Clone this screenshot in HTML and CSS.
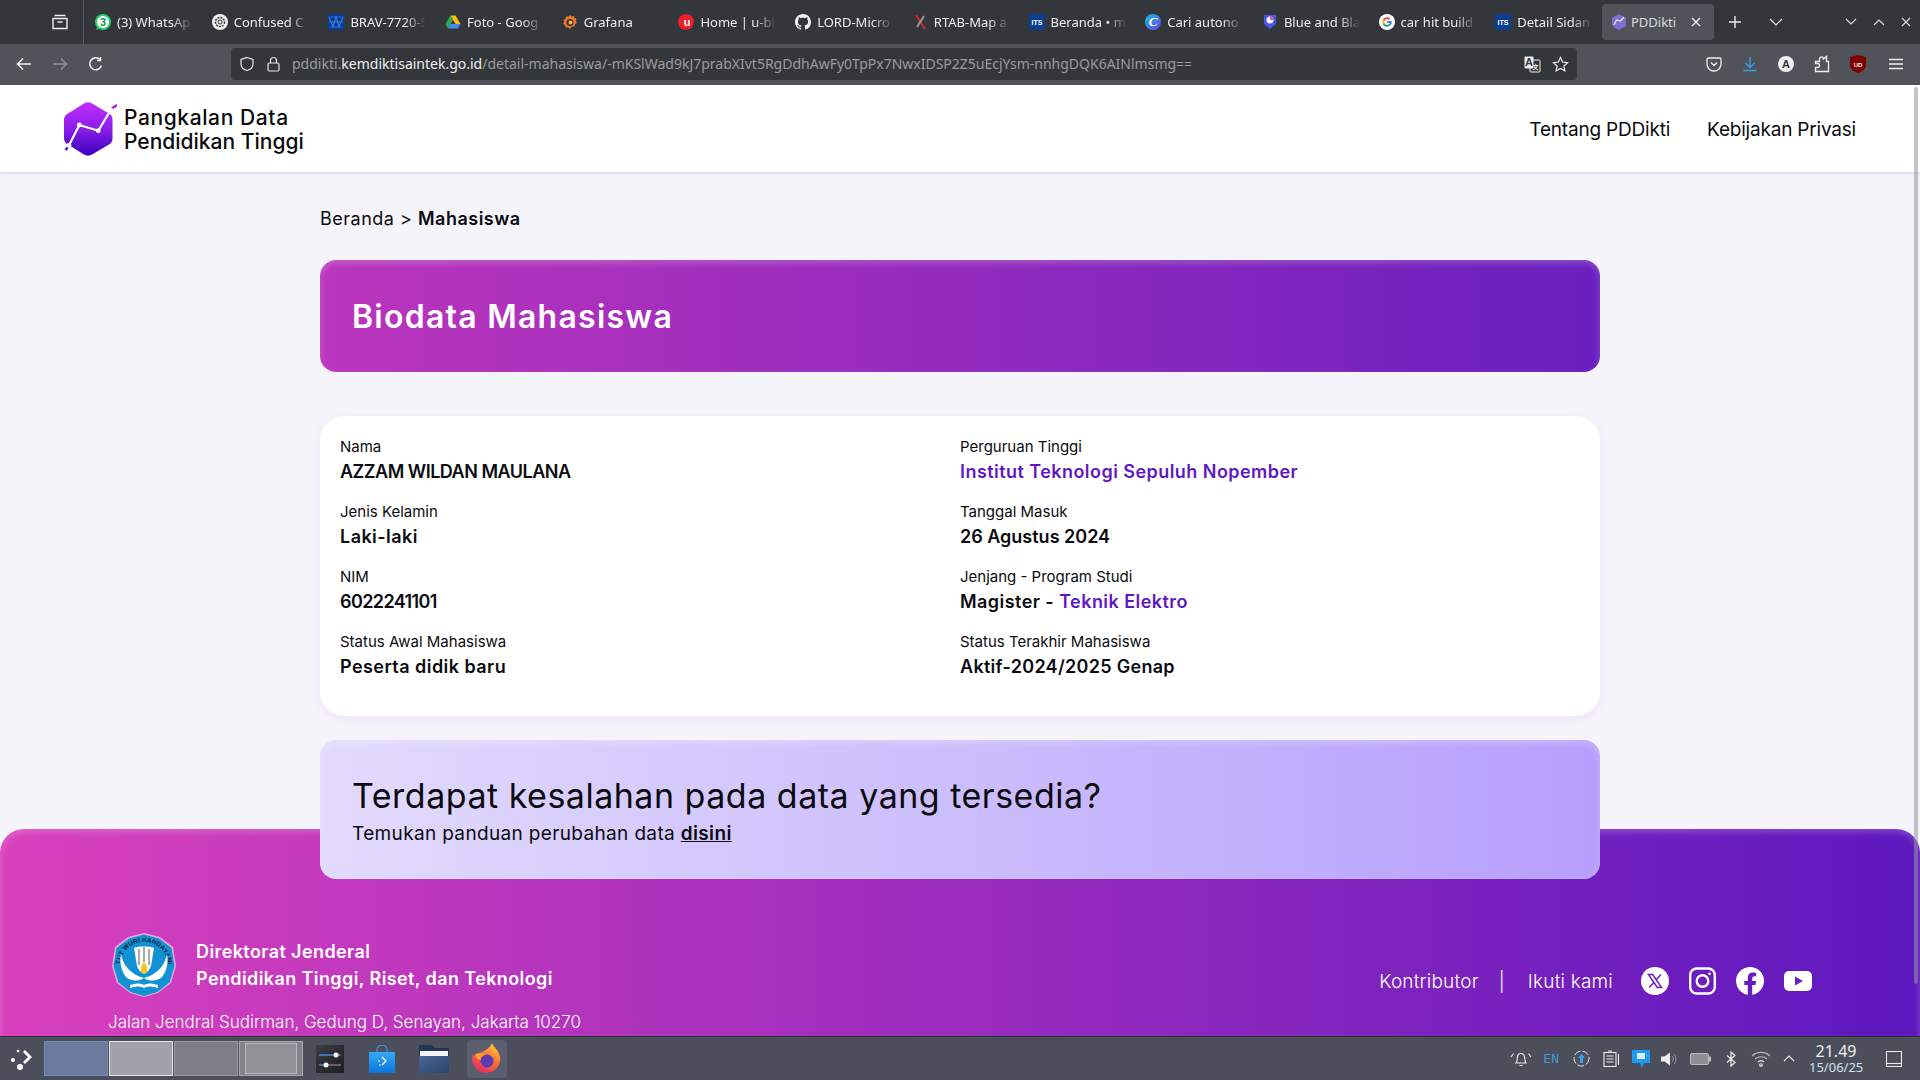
FILE: index.html
```html
<!DOCTYPE html>
<html lang="id">
<head>
<meta charset="utf-8">
<title>PDDikti</title>
<link rel="stylesheet" href="styles.css">
</head>
<body>
<div class="screen">
  <div class="tabbar">
    <div class="tabs-view">
      <svg width="18" height="18" viewBox="0 0 18 18" fill="none" stroke="#f1f1f1" stroke-width="1.4"><path d="M3.5 2.5h11M2 5.5h14v10H2zM6.5 9h5"/></svg>
    </div>
    <div class="tab"><svg class="fav" viewBox="0 0 16 16"><circle cx="8" cy="8" r="8" fill="#25d366"/><path d="M1 16l1.5-4 3 2z" fill="#25d366"/><circle cx="8" cy="8" r="6" fill="#fff"/><text x="8" y="11.5" class="favtxt" fill="#128c4a">3</text></svg><span class="tab-text">(3) WhatsAp</span></div>
    <div class="tab"><svg class="fav" viewBox="0 0 16 16"><circle cx="8" cy="8" r="8" fill="#eee"/><circle cx="8" cy="8" r="4.5" fill="none" stroke="#333" stroke-width="1.4" stroke-dasharray="2 1"/><circle cx="8" cy="8" r="2" fill="none" stroke="#333"/></svg><span class="tab-text">Confused C</span></div>
    <div class="tab"><svg class="fav" viewBox="0 0 16 16"><rect width="16" height="16" fill="#0a3a8c"/><path d="M1 3l4 10 3-10 3 10 4-10" fill="none" stroke="#2f7fe0" stroke-width="1.2"/><path d="M1 8h14M1 3h14M1 13h14" stroke="#2f7fe0" stroke-width=".8"/></svg><span class="tab-text">BRAV-7720-S</span></div>
    <div class="tab"><svg class="fav" viewBox="0 0 16 16"><path d="M5.5 1.5h5L15.5 10h-5z" fill="#fbbc04"/><path d="M5.5 1.5L.5 10l2.500 4.500L8 6z" fill="#34a853"/><path d="M3 14.500h10l2.500-4.500h-10z" fill="#4285f4"/></svg><span class="tab-text">Foto - Goog</span></div>
    <div class="tab"><svg class="fav" viewBox="0 0 16 16"><path d="M8 1l1.500 1.500L12 2l.5 2 2 1-.8 2 1.300 2-2 1-.5 2.500-2.500-.2L8 15l-2-1.700-2.500.2L3 11 1 10l1.300-2.300L1.500 5.500 3.500 5 4 2.500l2.500.3z" fill="#f2792a"/><circle cx="8" cy="8.500" r="3.600" fill="#33373c"/><circle cx="8.500" cy="8.500" r="2" fill="#f9b233"/></svg><span class="tab-text">Grafana</span></div>
    <div class="tab"><svg class="fav" viewBox="0 0 16 16"><circle cx="8" cy="8" r="8" fill="#e8202a"/><text x="9" y="12" class="favtxt" fill="#fff">u</text></svg><span class="tab-text">Home | u-bl</span></div>
    <div class="tab"><svg class="fav" viewBox="0 0 16 16"><path fill="#f0f0f0" fill-rule="evenodd" d="M8 0C3.580 0 0 3.580 0 8c0 3.540 2.290 6.530 5.470 7.590.4.070.55-.17.55-.38 0-.19-.01-.82-.01-1.490-2.010.37-2.530-.49-2.690-.94-.09-.23-.48-.94-.82-1.130-.28-.15-.68-.52-.01-.53.63-.01 1.080.58 1.230.82.720 1.210 1.870.87 2.330.66.070-.52.280-.87.510-1.070-1.780-.2-3.640-.89-3.640-3.950 0-.87.310-1.590.820-2.150-.08-.2-.36-1.020.08-2.120 0 0 .67-.21 2.200.82.640-.18 1.320-.27 2-.27s1.360.09 2 .27c1.530-1.040 2.200-.82 2.200-.82.440 1.100.160 1.920.080 2.120.510.560.820 1.270.820 2.150 0 3.070-1.870 3.750-3.650 3.950.290.250.540.730.540 1.480 0 1.070-.010 1.930-.010 2.200 0 .21.150.46.550.38A8.010 8.010 0 0 0 16 8c0-4.420-3.580-8-8-8z"/></svg><span class="tab-text">LORD-Micro</span></div>
    <div class="tab"><svg class="fav" viewBox="0 0 16 16"><path d="M4 1l9 14" stroke="#cf2a2a" stroke-width="2"/><path d="M12 2L5 13" stroke="#999" stroke-width="2"/></svg><span class="tab-text">RTAB-Map a</span></div>
    <div class="tab"><svg class="fav" viewBox="0 0 16 16"><rect width="16" height="16" rx="1" fill="#0b3d91"/><text x="8" y="10.500" class="favits" fill="#fff">ITS</text></svg><span class="tab-text">Beranda • m</span></div>
    <div class="tab"><svg class="fav" viewBox="0 0 16 16"><defs><linearGradient id="cv" x1="0" y1="0" x2="1" y2="1"><stop offset="0" stop-color="#10c6d8"/><stop offset="1" stop-color="#6a3df0"/></linearGradient></defs><circle cx="8" cy="8" r="8" fill="url(#cv)"/><text x="8" y="12" class="favtxt favserif" fill="#fff">C</text></svg><span class="tab-text">Cari autono</span></div>
    <div class="tab"><svg class="fav" viewBox="0 0 16 16"><path d="M2 1h12v9l-6 5-6-5z" fill="#4a55e8"/><circle cx="8" cy="6" r="3.500" fill="#fff"/><path d="M8 6V2.500A3.500 3.500 0 0 1 11.500 6z" fill="#e84aa8"/></svg><span class="tab-text">Blue and Bla</span></div>
    <div class="tab"><svg class="fav" viewBox="0 0 16 16"><circle cx="8" cy="8" r="8" fill="#fff"/><path d="M8 3.200a4.800 4.800 0 0 1 3.300 1.300l-1.400 1.400A2.800 2.800 0 0 0 5.300 7L3.700 5.700A4.800 4.800 0 0 1 8 3.200z" fill="#ea4335"/><path d="M3.700 5.700L5.300 7a2.900 2.900 0 0 0 0 2L3.700 10.300a4.800 4.800 0 0 1 0-4.600z" fill="#fbbc05"/><path d="M3.700 10.300L5.300 9a2.800 2.800 0 0 0 4.300 1.300l1.500 1.300A4.800 4.800 0 0 1 3.700 10.300z" fill="#34a853"/><path d="M12.800 7H8v2h2.700a2.400 2.400 0 0 1-1.100 1.300l1.500 1.300A4.800 4.800 0 0 0 12.800 7z" fill="#4285f4"/></svg><span class="tab-text">car hit build</span></div>
    <div class="tab"><svg class="fav" viewBox="0 0 16 16"><rect width="16" height="16" rx="1" fill="#0b3d91"/><text x="8" y="10.500" class="favits" fill="#fff">ITS</text></svg><span class="tab-text">Detail Sidan</span></div>
    <div class="tab tab-active"><svg class="fav" viewBox="0 0 16 16"><path d="M8 0l7 4v8l-7 4-7-4V4z" fill="#7d6fd0"/><path d="M3 11l2.500-5 4 1L13 3" fill="none" stroke="#e8e8f4" stroke-width="1.200"/></svg><span class="tab-text tab-text-solid">PDDikti</span><svg class="tab-close" width="10" height="10" viewBox="0 0 10 10" stroke="#eee" stroke-width="1.300"><path d="M1 1l8 8M9 1l-8 8"/></svg></div>
    <div class="tabbar-tools">
      <svg width="14" height="14" viewBox="0 0 14 14" stroke="#eee" stroke-width="1.400"><path d="M7 1v12M1 7h12"/></svg>
      <svg width="14" height="10" viewBox="0 0 14 10" fill="none" stroke="#eee" stroke-width="1.200"><path d="M1 2l6 6 6-6"/></svg>
    </div>
    <div class="window-btns">
      <svg width="12" height="8" viewBox="0 0 12 8" fill="none" stroke="#ddd" stroke-width="1.100"><path d="M1 1l5 5 5-5"/></svg>
      <svg width="12" height="8" viewBox="0 0 12 8" fill="none" stroke="#ddd" stroke-width="1.100"><path d="M1 7l5-5 5 5"/></svg>
      <svg width="10" height="10" viewBox="0 0 10 10" stroke="#ddd" stroke-width="1.100"><path d="M1 1l8 8M9 1l-8 8"/></svg>
    </div>
  </div>

  <div class="navbar">
    <div class="nav-btns">
      <svg width="16" height="14" viewBox="0 0 16 14" fill="none" stroke="#f0f0f0" stroke-width="1.500"><path d="M15 7H2M7 1.500L1.500 7 7 12.500"/></svg>
      <svg width="16" height="14" viewBox="0 0 16 14" fill="none" stroke="#8d9095" stroke-width="1.500"><path d="M1 7h13M9 1.500L14.500 7 9 12.500"/></svg>
      <svg width="16" height="16" viewBox="0 0 16 16" fill="none" stroke="#f0f0f0" stroke-width="1.500"><path d="M13.500 9.500A6 6 0 1 1 12 3.500M12.500 1v3.500H9"/></svg>
    </div>
    <div class="urlbar">
      <svg width="16" height="16" viewBox="0 0 16 16" fill="none" stroke="#e8e8e8" stroke-width="1.200"><path d="M8 1.500l6 2v4.500c0 3-2.500 5.500-6 6.500-3.500-1-6-3.500-6-6.500V3.500z"/></svg>
      <svg width="13" height="16" viewBox="0 0 13 16" fill="none" stroke="#e8e8e8" stroke-width="1.200"><rect x="1" y="7" width="11" height="8" rx="1.500"/><path d="M3.500 7V4.500a3 3 0 0 1 6 0V7"/></svg>
      <div class="url"><span class="url-dim">pddikti.</span><span class="url-host">kemdiktisaintek.go.id</span><span class="url-dim">/detail-mahasiswa/-mKSlWad9kJ7prabXIvt5RgDdhAwFy0TpPx7NwxIDSP2Z5uEcjYsm-nnhgDQK6AINlmsmg==</span></div>
      <svg width="17" height="17" viewBox="0 0 17 17"><rect x="6" y="4" width="10" height="12" rx="1" fill="#33373c" stroke="#eee"/><rect x="0.500" y="0.500" width="9" height="12" rx="1" fill="#eee"/><text x="5" y="10" class="favtxt favdark">A</text><text x="11.500" y="13" class="favtiny" fill="#eee">文</text></svg>
      <svg width="17" height="17" viewBox="0 0 17 17" fill="none" stroke="#eee" stroke-width="1.200"><path d="M8.500 1.500l2.100 4.500 4.900.6-3.600 3.400 1 4.800-4.400-2.400-4.400 2.400 1-4.800L1.500 6.600l4.900-.6z"/></svg>
    </div>
    <div class="nav-ext">
      <svg width="16" height="16" viewBox="0 0 16 16" fill="none" stroke="#eee" stroke-width="1.300"><path d="M2.500 2h11A1.500 1.500 0 0 1 15 3.500V8a7 7 0 0 1-14 0V3.500A1.500 1.500 0 0 1 2.500 2zM5 6.500l3 3 3-3"/></svg>
      <svg width="16" height="16" viewBox="0 0 16 16" fill="none" stroke="#3aa0e8" stroke-width="1.400"><path d="M8 1v10M3.500 7L8 11.500 12.500 7M1.500 14.500h13"/></svg>
      <svg width="16" height="16" viewBox="0 0 16 16"><circle cx="8" cy="8" r="8" fill="#eee"/><text x="8" y="12" class="favtxt favdark">A</text></svg>
      <svg width="16" height="18" viewBox="0 0 16 18" fill="none" stroke="#eee" stroke-width="1.300"><path d="M1.500 6.500h4V4a2 2 0 0 1 4 0v0l3-2.500v5h2v10h-13v-4h2a2 2 0 0 0 0-4h-2z"/></svg>
      <svg width="16" height="18" viewBox="0 0 16 18"><path d="M8 0l8 2v8c0 4-4 7-8 8-4-1-8-4-8-8V2z" fill="#800000"/><text x="8" y="11.500" class="favtiny" fill="#eee">UD</text></svg>
      <svg class="menu-icon" width="14" height="12" viewBox="0 0 14 12" stroke="#eee" stroke-width="1.300"><path d="M0 1.500h14M0 6h14M0 10.500h14"/></svg>
    </div>
  </div>

  <div class="viewport">
    <header class="site-header">
      <div class="brand">
        <svg class="brand-logo" width="53" height="54" viewBox="0 0 53 54">
          <defs><linearGradient id="logo" x1="0" y1="0" x2="0" y2="1"><stop offset="0" stop-color="#c22dff"/><stop offset=".5" stop-color="#8a1ee8"/><stop offset="1" stop-color="#3700bd"/></linearGradient></defs>
          <path d="M20 1.500a8 8 0 0 1 8 0l17 10a7 7 0 0 1 3.500 6v19a7 7 0 0 1-3.500 6l-17 10a8 8 0 0 1-8 0l-16-10a7 7 0 0 1-4-6v-19a7 7 0 0 1 4-6z" fill="url(#logo)"/>
          <path d="M4.300 44.700L15.300 23l19 5.700L47.700 6.300" fill="none" stroke="#fff" stroke-width="2.200"/>
          <path d="M47 7L53 3" stroke="#a024f5" stroke-width="2.500"/>
          <path d="M4 45l-2.500 3" stroke="#5a10cf" stroke-width="2.500"/>
          <circle cx="15.300" cy="23" r="2.400" fill="#fff"/><circle cx="34.300" cy="28.700" r="2.400" fill="#fff"/><circle cx="46.700" cy="7.800" r="2.400" fill="#fff"/><circle cx="5" cy="43.500" r="2.400" fill="#fff"/>
        </svg>
        <div class="brand-text"><div class="brand-l1">Pangkalan Data</div><div class="brand-l2">Pendidikan Tinggi</div></div>
      </div>
      <nav class="site-nav"><a>Tentang PDDikti</a><a>Kebijakan Privasi</a></nav>
    </header>

    <main class="content">
      <div class="crumbs">Beranda &gt; <b>Mahasiswa</b></div>
      <section class="hero"><h1>Biodata Mahasiswa</h1></section>
      <section class="bio-card">
        <div class="field"><div class="f-label">Nama</div><div class="f-value f-caps">AZZAM WILDAN MAULANA</div></div>
        <div class="field"><div class="f-label">Perguruan Tinggi</div><div class="f-value"><a class="f-link">Institut Teknologi Sepuluh Nopember</a></div></div>
        <div class="field"><div class="f-label">Jenis Kelamin</div><div class="f-value">Laki-laki</div></div>
        <div class="field"><div class="f-label">Tanggal Masuk</div><div class="f-value f-date">26 Agustus 2024</div></div>
        <div class="field"><div class="f-label">NIM</div><div class="f-value f-num">6022241101</div></div>
        <div class="field"><div class="f-label">Jenjang - Program Studi</div><div class="f-value">Magister - <a class="f-link">Teknik Elektro</a></div></div>
        <div class="field"><div class="f-label">Status Awal Mahasiswa</div><div class="f-value">Peserta didik baru</div></div>
        <div class="field"><div class="f-label">Status Terakhir Mahasiswa</div><div class="f-value f-last">Aktif-2024/2025 Genap</div></div>
      </section>
      <section class="help">
        <h2>Terdapat kesalahan pada data yang tersedia?</h2>
        <p>Temukan panduan perubahan data <a>disini</a></p>
      </section>
    </main>

    <footer class="site-footer">
      <div class="foot-left">
        <div class="foot-org">
          <svg class="emblem" width="64" height="66" viewBox="0 0 64 66">
            <defs><path id="arc" d="M8 34a24 24 0 0 1 48 0"/></defs>
            <path d="M32 1l16 4 13 10 3 19-5 17-13 10-14 4-14-4-13-10L0 34l3-19L16 5z" fill="#fff" opacity=".55"/>
            <path d="M32 2.500l15 4 12.500 9.500 3 18-5 16.500-12 9.500-13.500 4-13.500-4-12-9.500-5-16.500 3-18L17 6.500z" fill="#1192d4"/>
            <text class="emblem-text" fill="#10233f"><textPath href="#arc" startOffset="50%" text-anchor="middle">TUT WURI HANDAYANI</textPath></text>
            <path d="M22 16c3-2 17-2 20 0l-3 18c-1 3-3 6-7 8-4-2-6-5-7-8z" fill="#fff"/>
            <path d="M27 17v16M32 15v15M37 17v16" stroke="#555" stroke-width="1"/>
            <path d="M9 22c2 10 8 20 23 24-6 4-14 3-18-1-4-5-7-14-5-23zM55 22c-2 10-8 20-23 24 6 4 14 3 18-1 4-5 7-14 5-23z" fill="#fff"/>
            <path d="M32 30c3 3 4 7 3 10-1 2-5 2-6 0-1-3 0-7 3-10z" fill="#f7c81e"/>
            <path d="M18 53c5-2 10-2 14 0 4-2 9-2 14 0v3c-5-2-10-2-14 0-4-2-9-2-14 0z" fill="#fff"/>
          </svg>
          <div class="org-text"><div>Direktorat Jenderal</div><div>Pendidikan Tinggi, Riset, dan Teknologi</div></div>
        </div>
        <div class="foot-addr">Jalan Jendral Sudirman, Gedung D, Senayan, Jakarta 10270</div>
      </div>
      <div class="foot-right">
        <a>Kontributor</a><span class="foot-sep">|</span><a>Ikuti kami</a>
        <div class="socials">
          <svg width="28" height="28" viewBox="0 0 28 28"><circle cx="14" cy="14" r="14" fill="#fff"/><path d="M7.500 7.500h4.200l8.800 13h-4.200zM20 7.500L15 13M13 15.500L8 20.500" fill="none" stroke="#6a1fc0" stroke-width="1.500"/></svg>
          <svg width="27" height="28" viewBox="0 0 27 28" fill="none" stroke="#fff" stroke-width="2.400"><rect x="1.200" y="1.500" width="24.600" height="25" rx="6.500"/><circle cx="13.500" cy="14" r="5.800"/><circle cx="20.500" cy="6.800" r="1.400" fill="#fff" stroke="none"/></svg>
          <svg width="28" height="28" viewBox="0 0 28 28"><path fill="#fff" d="M28 14a14 14 0 1 0-16.200 13.800v-9.800H8.300V14h3.500v-3.100c0-3.500 2.100-5.400 5.300-5.400 1.500 0 3.100.3 3.100.3v3.400h-1.700c-1.700 0-2.300 1.100-2.300 2.200V14h3.900l-.6 4h-3.300v9.800A14 14 0 0 0 28 14z"/></svg>
          <svg width="28" height="20" viewBox="0 0 28 20"><rect width="28" height="20" rx="5" fill="#fff"/><path d="M11 5.500v9l8-4.500z" fill="#6a1fc0"/></svg>
        </div>
      </div>
    </footer>
    <div class="scroll-thumb"></div>
  </div>

  <div class="taskbar">
    <svg class="launcher" width="24" height="24" viewBox="0 0 24 24" fill="#fff"><path d="M13 3l7 7-7 7-2-2 5-5-5-5z" transform="translate(2 0)"/><circle cx="8" cy="4" r="1.300"/><circle cx="3" cy="13" r="2"/><circle cx="10" cy="20" r="3"/></svg>
    <div class="pager">
      <div class="desk desk-1"></div>
      <div class="desk desk-2"></div>
      <div class="desk desk-3"></div>
      <div class="desk desk-4"><div class="desk-win"></div></div>
    </div>
    <div class="task-apps">
      <div class="task-app"><svg width="28" height="28" viewBox="0 0 28 28"><defs><linearGradient id="setg" x1="0" y1="0" x2="1" y2="1"><stop offset="0" stop-color="#3a3d42"/><stop offset="1" stop-color="#1d1e21"/></linearGradient></defs><rect width="28" height="28" fill="url(#setg)"/><path d="M3 10h17M3 20h9" stroke="#3f6fb0" stroke-width="2"/><path d="M20 10h5M12 20h13" stroke="#777" stroke-width="1.500"/><circle cx="20" cy="10" r="2.500" fill="#fff"/><circle cx="10" cy="20" r="2.500" fill="#fff"/></svg></div>
      <div class="task-app"><svg width="26" height="28" viewBox="0 0 26 28"><defs><linearGradient id="store" x1="0" y1="0" x2="0" y2="1"><stop offset="0" stop-color="#36a8f5"/><stop offset="1" stop-color="#0a74dc"/></linearGradient></defs><path d="M8 7V5a5 5 0 0 1 10 0v2" fill="none" stroke="#2c93e0" stroke-width="1.300"/><rect x="0" y="7" width="26" height="21" fill="url(#store)"/><path d="M13 12l4 4-4 4" fill="none" stroke="#fff" stroke-width="1.300"/><circle cx="10" cy="16" r=".8" fill="#fff"/><circle cx="11" cy="20" r=".8" fill="#fff"/></svg></div>
      <div class="task-app"><svg width="30" height="28" viewBox="0 0 30 28"><defs><linearGradient id="fold" x1="0" y1="0" x2="1" y2="1"><stop offset="0" stop-color="#47669a"/><stop offset="1" stop-color="#2b4468"/></linearGradient></defs><path d="M0 0h13l3 3h14v25H0z" fill="#223654"/><rect x="1" y="6" width="28" height="6" fill="#f2f2f2"/><rect y="11" width="30" height="17" fill="url(#fold)"/></svg></div>
      <div class="task-app task-app-on"><svg width="30" height="32" viewBox="0 0 30 32"><defs><linearGradient id="fx" x1="0.800" y1="0" x2="0.200" y2="1"><stop offset="0" stop-color="#ffd23a"/><stop offset=".45" stop-color="#ff7130"/><stop offset="1" stop-color="#e0246a"/></linearGradient></defs><path d="M20 0c1 4 7 7 8 14a14 14 0 1 1-27-3c.5 1 1 2 2 2 1-3 4-3 7-4 4-2 8-4 10-9z" fill="url(#fx)"/><circle cx="15" cy="18" r="6.500" fill="#5b3bb0"/><path d="M3 12c3-3 8-2 11 0-3 0-6 2-5 5-3 0-5-2-6-5z" fill="#ff9a2e"/></svg></div>
    </div>
    <div class="tray">
      <svg width="22" height="16" viewBox="0 0 22 16" fill="none" stroke="#eee" stroke-width="1.100"><path d="M6 12c1.500-2 1-4 1.500-6a3.500 3.500 0 0 1 7 0c.5 2 0 4 1.500 6zM9.500 14.500h3M3.500 2.500L1 6M18.500 2.500L21 6"/></svg>
      <span class="tray-en">EN</span>
      <svg width="17" height="17" viewBox="0 0 17 17" fill="none"><circle cx="8.500" cy="8.500" r="7.500" stroke="#eee" stroke-dasharray="7 2"/><path d="M8.500 3.500L12 8h-2v5H7V8H5z" fill="#3aa0e8"/></svg>
      <svg width="17" height="17" viewBox="0 0 17 17" fill="none" stroke="#eee" stroke-width="1.100"><rect x="1" y="2.500" width="12" height="14"/><path d="M5 1h4M3.500 6h7M3.500 9h7M3.500 12h7M15.500 4v11"/></svg>
      <svg width="18" height="18" viewBox="0 0 18 18"><path d="M0 0h18v13h-6l-2 5-2-5H0z" fill="#1f9bf0"/><rect x="5" y="3" width="8" height="6" fill="#d8eefc"/></svg>
      <svg width="17" height="16" viewBox="0 0 17 16" fill="none"><path d="M0 5.500h3.500L9 1.500v13l-5.500-4H0z" fill="#eee"/><path d="M11 5a4 4 0 0 1 0 6M13 3a7 7 0 0 1 0 10" stroke="#999"/></svg>
      <svg width="21" height="12" viewBox="0 0 21 12"><rect x=".5" y=".5" width="18" height="11" rx="1.500" fill="#8d8f96" stroke="#bbb"/><rect x="19" y="3.500" width="2" height="5" fill="#bbb"/></svg>
      <svg width="10" height="16" viewBox="0 0 10 16" fill="none" stroke="#eee" stroke-width="1.200"><path d="M1 4.500l8 7L5 15V1l4 3.500-8 7"/></svg>
      <svg width="20" height="16" viewBox="0 0 20 16" fill="none" stroke="#bbb" stroke-width="1.100"><path d="M1 5a13 13 0 0 1 18 0M4 8a9 9 0 0 1 12 0"/><path d="M7 11a4.500 4.500 0 0 1 6 0" stroke="#eee"/><circle cx="10" cy="14" r="1.300" stroke="#eee"/></svg>
      <svg width="12" height="7" viewBox="0 0 12 7" fill="none" stroke="#eee" stroke-width="1.100"><path d="M1 6l5-5 5 5"/></svg>
      <div class="clock"><div class="clock-time">21.49</div><div class="clock-date">15/06/25</div></div>
      <svg width="16" height="16" viewBox="0 0 16 16" fill="none" stroke="#eee" stroke-width="1.100"><rect x=".5" y=".5" width="15" height="15"/><path d="M.5 12.500h15"/></svg>
    </div>
  </div>
</div>
</body>
</html>
```

FILE: styles.css
```css
* { box-sizing: border-box; }
html, body { margin: 0; padding: 0; height: 100%; overflow: hidden; }
body { font-family: "Inter", "Noto Sans", sans-serif; color: #0b0b10; }
svg { display: block; flex: none; }
.screen { height: 1080px; display: flex; flex-direction: column; overflow: hidden; }

/* browser tab strip */
.tabbar { height: 44px; background: #33373c; display: flex; align-items: center; font-family: "Noto Sans", sans-serif; font-size: 13px; color: #eceded; flex: none; }
.tabs-view { width: 84px; height: 44px; border-right: 1px solid #565a60; display: flex; align-items: center; padding-left: 51px; }
.tab { width: 116.7px; height: 36px; display: flex; align-items: center; gap: 6px; padding-left: 11px; flex: none; }
.tab-text { width: 76px; white-space: nowrap; overflow: hidden; -webkit-mask-image: linear-gradient(90deg, #000 72%, transparent); mask-image: linear-gradient(90deg, #000 72%, transparent); }
.tab-text-solid { width: 50px; -webkit-mask-image: none; mask-image: none; color: #d9dadc; }
.tab-active { width: 112px; margin-left: 1px; padding-left: 9px; gap: 4px; background: #50545a; border-radius: 4px; position: relative; }
.tab-close { margin-left: 6px; }
.fav { width: 16px; height: 16px; }
.favtxt { font-family: "Liberation Sans", sans-serif; font-size: 11px; font-weight: 700; text-anchor: middle; }
.favserif { font-family: "Liberation Serif", serif; font-style: italic; font-size: 13px; }
.favits { font-family: "Liberation Sans", sans-serif; font-size: 7px; font-weight: 700; text-anchor: middle; }
.favtiny { font-family: "Liberation Sans", "Noto Sans CJK SC", sans-serif; font-size: 6px; font-weight: 700; text-anchor: middle; }
.favdark { fill: #33373c; }
.tabbar-tools { display: flex; align-items: center; gap: 27px; margin-left: 14px; }
.window-btns { display: flex; align-items: center; gap: 16px; margin-left: auto; padding-right: 9px; }

/* browser nav */
.navbar { height: 41px; padding-bottom: 1px; background: #50545a; display: flex; align-items: center; flex: none; }
.nav-btns { width: 231px; display: flex; align-items: center; gap: 20px; padding-left: 16px; }
.urlbar { width: 1346px; height: 32px; background: #33373c; border-radius: 4px; display: flex; align-items: center; padding: 0 8px; font-family: "Noto Sans", sans-serif; font-size: 14px; }
.urlbar > svg:nth-child(2) { margin-left: 12px; }
.urlbar > svg:nth-last-child(1) { margin-left: 11px; }
.url { flex: 1; margin-left: 12px; padding-bottom: 2px; white-space: nowrap; overflow: hidden; }
.url-dim { color: #9a9c9f; }
.url-host { color: #f0f0f0; }
.nav-ext { flex: 1; display: flex; align-items: center; justify-content: flex-end; gap: 20px; padding-right: 17px; }
.menu-icon { margin-left: 3px; }

/* page */
.viewport { flex: 1; min-height: 0; background: #f5f4fb; position: relative; overflow: hidden; display: flex; flex-direction: column; }
.site-header { height: 87px; background: #fff; box-shadow: 0 1px 3px rgba(60, 50, 110, .18); display: flex; align-items: center; justify-content: space-between; padding: 0 64px; flex: none; }
.brand { display: flex; align-items: center; gap: 7px; }
.brand-text { font-size: 21px; font-weight: 500; line-height: 24px; color: #0a0a0a; padding-top: 2px; }
.brand-l1 { letter-spacing: .6px; }
.brand-l2 { letter-spacing: 0; }
.site-nav { display: flex; gap: 37px; padding-top: 2px; font-size: 19px; letter-spacing: -.2px; color: #0b0b10; }
.content { width: 1280px; margin: 0 auto; padding-top: 33px; flex: none; position: relative; z-index: 1; }
.crumbs { font-size: 18px; line-height: 28px; letter-spacing: .5px; }
.crumbs b { font-weight: 600; }
.hero { height: 112px; margin-top: 27px; border-radius: 16px; background: linear-gradient(90deg, #bb35bd, #6a1fbe); box-shadow: inset 0 3px 7px rgba(255, 255, 255, .22); padding: 0 32px; display: flex; align-items: center; }
.hero h1 { margin: 0; color: #fff; font-size: 32px; font-weight: 600; letter-spacing: 1.250px; }
.bio-card { height: 300px; margin-top: 44px; background: #fff; border-radius: 24px; box-shadow: 0 3px 10px rgba(190, 90, 220, .12); padding: 20px; display: grid; grid-template-columns: 1fr 1fr; grid-auto-rows: 50px; row-gap: 15px; }
.f-label { font-size: 15px; line-height: 22px; }
.f-value { font-size: 18px; font-weight: 600; line-height: 28px; letter-spacing: .45px; }
.f-caps { letter-spacing: -.5px; }
.f-num { letter-spacing: -.6px; }
.f-date { letter-spacing: 0; }
.f-last { letter-spacing: .3px; }
.f-link { color: #5f18bf; }
.help { height: 139px; margin-top: 24px; border-radius: 16px; background: linear-gradient(90deg, #e2dbfd, #b69ffc); box-shadow: inset 0 3px 7px rgba(255, 255, 255, .25); padding: 33px 32px 0; }
.help h2 { margin: 0; font-size: 34px; font-weight: 400; line-height: 46px; letter-spacing: .5px; }
.help p { margin: 0; padding-top: 1px; font-size: 19px; line-height: 28px; letter-spacing: .35px; }
.help a { font-weight: 600; text-decoration: underline; }

/* footer */
.site-footer { height: 240px; margin-top: -50px; flex: none; border-radius: 24px 24px 0 0; background: linear-gradient(90deg, #d940bd, #5d18bf); box-shadow: inset 0 3px 7px rgba(255, 255, 255, .22); color: #fff; display: flex; justify-content: space-between; padding: 103px 108px 0; }
.foot-org { display: flex; align-items: center; gap: 20px; padding-left: 4px; }
.org-text { font-size: 18px; font-weight: 600; line-height: 27px; letter-spacing: .4px; }
.foot-addr { font-size: 17px; font-weight: 300; margin-top: 12px; line-height: 24px; }
.foot-right { display: flex; align-items: center; height: 98px; font-size: 19px; font-weight: 300; letter-spacing: .2px; }
.foot-sep { margin: 0 23px 0 20px; }
.socials { display: flex; align-items: center; gap: 20px; margin-left: 28px; }
.scroll-thumb { position: absolute; top: 2px; right: 2px; width: 4px; height: 897px; border-radius: 2px; background: rgba(150, 150, 155, .55); z-index: 2; }

/* desktop panel */
.taskbar { height: 44px; flex: none; background: #4c4f5b; border-top: 1px solid #2c2e36; display: flex; align-items: center; padding-left: 10px; }
.launcher { width: 24px; }
.pager { display: flex; margin-left: 10px; gap: 1px; height: 35px; }
.desk { width: 64px; border: 1px solid #8c8e96; }
.desk-1 { background: #6b7b9f; border-color: #7a8bb0; }
.desk-2 { background: #a2a2aa; border-color: #e6e6ea; }
.desk-3 { background: #7c7d85; border-color: #9a9ba2; }
.desk-4 { background: #82838b; border-color: #a7a8ae; padding: 1px 5px; }
.desk-win { height: 100%; background: #919198; border: 1px solid #b7b7bd; }
.task-apps { display: flex; align-items: center; margin-left: 1px; }
.task-app { width: 52px; height: 38px; display: flex; align-items: center; justify-content: center; }
.task-app-on { width: 40px; margin-left: 7px; background: #5a5e70; border-radius: 4px; }
.tray { margin-left: auto; display: flex; align-items: center; padding-right: 18px; }
.tray > :nth-child(2) { margin-left: 11px; }
.tray > :nth-child(3) { margin-left: 14px; }
.tray > :nth-child(4) { margin-left: 13px; }
.tray > :nth-child(5) { margin-left: 12px; }
.tray > :nth-child(6) { margin-left: 11px; }
.tray > :nth-child(7) { margin-left: 12px; }
.tray > :nth-child(8) { margin-left: 15px; }
.tray > :nth-child(9) { margin-left: 15px; }
.tray > :nth-child(10) { margin-left: 12px; }
.tray > :nth-child(11) { margin-left: 14px; }
.tray > :nth-child(12) { margin-left: 23px; }
.tray-en { font-family: "DejaVu Sans Mono", monospace; font-size: 13px; color: #3f9bd8; }
.clock { width: 54px; text-align: center; font-family: "Noto Sans", sans-serif; color: #eef0f4; }
.clock-time { font-size: 16px; line-height: 18px; }
.clock-date { font-size: 13px; line-height: 15px; color: #cfe3f2; }
.emblem-text { font-family: "Liberation Sans", sans-serif; font-size: 6.500px; font-weight: 700; }
```
